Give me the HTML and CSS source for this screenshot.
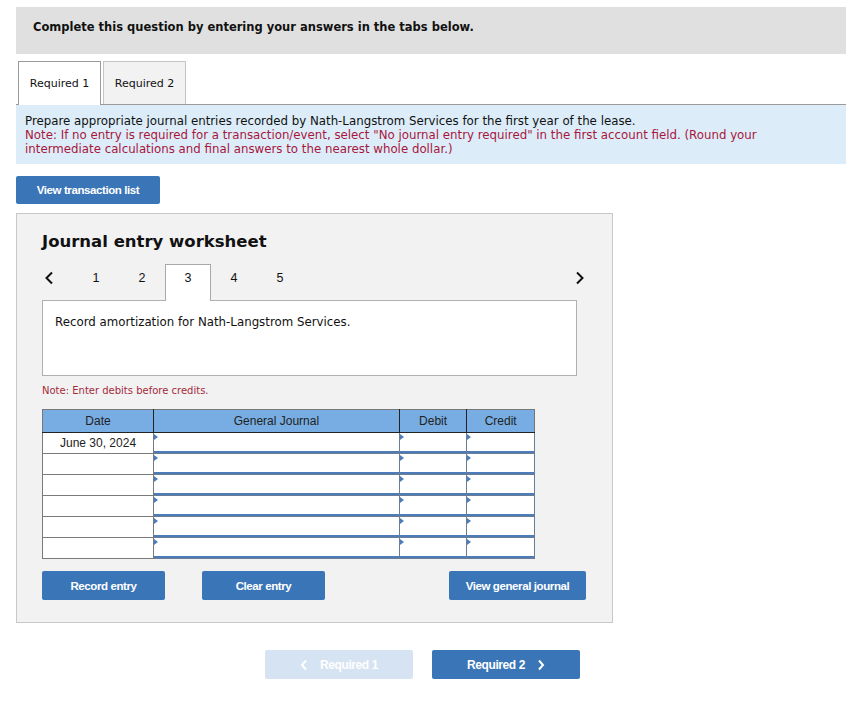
FILE: index.html
```html
<!DOCTYPE html>
<html lang="en">
<head>
    <meta charset="UTF-8">
    <title>Journal entry worksheet</title>
    <link rel="stylesheet" href="styles.css">
</head>
<body>
    <div class="pagina">
        <div class="cabecera">Complete this question by entering your answers in the tabs below.</div>

        <div class="pestanas">
            <div class="pestana activa">Required 1</div>
            <div class="pestana">Required 2</div>
        </div>

        <div class="instrucciones">
            Prepare appropriate journal entries recorded by Nath-Langstrom Services for the first year of the lease.<br>
            <span class="nota">Note: If no entry is required for a transaction/event, select "No journal entry required" in the first account field. (Round your intermediate calculations and final answers to the nearest whole dollar.)</span>
        </div>

        <button class="boton lista">View transaction list</button>

        <div class="hoja">
            <h2>Journal entry worksheet</h2>
            <div class="navegacion">
                <span class="flecha">
                    <svg width="10" height="14" viewBox="0 0 10 14"><polyline points="8,1.5 2.5,7 8,12.5" fill="none" stroke="#111" stroke-width="2"/></svg>
                </span>
                <span class="paso">1</span>
                <span class="paso">2</span>
                <span class="paso actual">3</span>
                <span class="paso">4</span>
                <span class="paso">5</span>
                <span class="hueco"></span>
                <span class="flecha der">
                    <svg width="10" height="14" viewBox="0 0 10 14"><polyline points="2,1.5 7.5,7 2,12.5" fill="none" stroke="#111" stroke-width="2"/></svg>
                </span>
            </div>
            <div class="descripcion">Record amortization for Nath-Langstrom Services.</div>
            <p class="aviso">Note: Enter debits before credits.</p>

            <table class="diario">
                <thead>
                    <tr>
                        <th class="c-fecha">Date</th>
                        <th class="c-cuenta">General Journal</th>
                        <th class="c-num">Debit</th>
                        <th class="c-num">Credit</th>
                    </tr>
                </thead>
                <tbody>
                    <tr>
                        <td class="fecha">June 30, 2024</td>
                        <td class="campo"><div class="caja"></div></td>
                        <td class="campo"><div class="caja"></div></td>
                        <td class="campo"><div class="caja"></div></td>
                    </tr>
                    <tr>
                        <td class="fecha"></td>
                        <td class="campo"><div class="caja"></div></td>
                        <td class="campo"><div class="caja"></div></td>
                        <td class="campo"><div class="caja"></div></td>
                    </tr>
                    <tr>
                        <td class="fecha"></td>
                        <td class="campo"><div class="caja"></div></td>
                        <td class="campo"><div class="caja"></div></td>
                        <td class="campo"><div class="caja"></div></td>
                    </tr>
                    <tr>
                        <td class="fecha"></td>
                        <td class="campo"><div class="caja"></div></td>
                        <td class="campo"><div class="caja"></div></td>
                        <td class="campo"><div class="caja"></div></td>
                    </tr>
                    <tr>
                        <td class="fecha"></td>
                        <td class="campo"><div class="caja"></div></td>
                        <td class="campo"><div class="caja"></div></td>
                        <td class="campo"><div class="caja"></div></td>
                    </tr>
                    <tr>
                        <td class="fecha"></td>
                        <td class="campo"><div class="caja"></div></td>
                        <td class="campo"><div class="caja"></div></td>
                        <td class="campo"><div class="caja"></div></td>
                    </tr>
                </tbody>
            </table>

            <div class="acciones">
                <button class="boton registrar">Record entry</button>
                <button class="boton limpiar">Clear entry</button>
                <button class="boton ver">View general journal</button>
            </div>
        </div>

        <div class="pie">
            <button class="boton anterior">
                <svg width="8" height="12" viewBox="0 0 8 12"><polyline points="6,1.5 2,6 6,10.5" fill="none" stroke="#fff" stroke-width="2"/></svg>
                Required 1
            </button>
            <button class="boton siguiente">
                Required 2
                <svg width="8" height="12" viewBox="0 0 8 12"><polyline points="2,1.5 6,6 2,10.5" fill="none" stroke="#fff" stroke-width="2"/></svg>
            </button>
        </div>
    </div>
</body>
</html>
```

FILE: styles.css
```css
body{
    margin: 0;
    padding: 0;
    font-family: "DejaVu Sans", Verdana, sans-serif;
    color: #111;
    background: #fff;
}
.pagina{
    width: 830px;
    padding: 7px 0 0 16px;
}
.cabecera{
    height: 47px;
    box-sizing: border-box;
    padding: 12px 17px 0;
    background-color: #e0e0e0;
    font-size: 11.5px;
    font-weight: bold;
    line-height: 16px;
}
.pestanas{
    display: flex;
    gap: 2px;
    margin-top: 7px;
    padding-left: 2px;
    border-bottom: 1px solid #9a9a9a;
}
.pestana{
    width: 83px;
    height: 43px;
    box-sizing: border-box;
    border: 1px solid #c4c4c4;
    border-bottom: none;
    background-color: #f2f2f2;
    font-size: 11px;
    line-height: 43px;
    text-align: center;
    margin-bottom: -1px;
}
.pestana.activa{
    background-color: #fff;
    border-color: #9a9a9a;
    height: 44px;
}
.instrucciones{
    background-color: #dcedf9;
    padding: 9px 70px 8px 9px;
    font-size: 11.8px;
    line-height: 14px;
}
.nota{
    color: #a8163c;
}
.boton{
    border: none;
    border-radius: 2px;
    background-color: #3a75b8;
    color: #fff;
    font-family: "Liberation Sans", Arial, sans-serif;
    font-weight: bold;
    font-size: 11.5px;
    letter-spacing: -0.4px;
    cursor: pointer;
    padding: 0;
}
.lista{
    display: block;
    margin-top: 12px;
    width: 144px;
    height: 28px;
}
.hoja{
    margin-top: 9px;
    width: 597px;
    box-sizing: border-box;
    background-color: #f2f2f2;
    border: 1px solid #c8c8c8;
    padding: 17px 0 22px 25px;
}
.hoja h2{
    margin: 0;
    font-size: 16.5px;
    line-height: 22px;
}
.navegacion{
    display: flex;
    align-items: flex-start;
    margin-top: 11px;
    width: 548px;
    height: 36px;
    font-family: "Liberation Sans", Arial, sans-serif;
    font-size: 12.5px;
}
.flecha{
    width: 31px;
    display: flex;
    padding: 7px 0 0 2px;
    box-sizing: border-box;
}
.flecha.der{
    width: 17px;
}
.paso{
    width: 46px;
    height: 36px;
    line-height: 28px;
    text-align: center;
    box-sizing: border-box;
}
.paso.actual{
    background-color: #fff;
    border: 1px solid #a8a8a8;
    border-bottom: none;
    height: 37px;
    line-height: 26px;
    margin-bottom: -1px;
    position: relative;
    z-index: 1;
}
.hueco{
    flex: 1;
}
.descripcion{
    width: 535px;
    height: 76px;
    box-sizing: border-box;
    background-color: #fff;
    border: 1px solid #b0b0b0;
    padding: 13px 12px;
    font-size: 11.8px;
    line-height: 16px;
}
.aviso{
    margin: 9px 0 0;
    font-size: 10px;
    line-height: 12px;
    color: #a52a3a;
}
.diario{
    margin-top: 12px;
    border-collapse: collapse;
    width: 493px;
    font-family: "Liberation Sans", Arial, sans-serif;
    font-size: 12px;
    border: 1px solid #777;
}
.diario th{
    background-color: #78ade3;
    font-weight: normal;
    color: #222;
    height: 22px;
    padding: 0;
    border-left: 1px solid #222;
    border-bottom: 1px solid #222;
}
.diario th:first-child{
    border-left: 1px solid #777;
}
.c-fecha{ width: 111px; }
.c-cuenta{ width: 247px; }
.c-num{ width: 67px; }
.diario td{
    padding: 0;
    height: 20px;
    border: 1px solid #7a7a7a;
    background-color: #fff;
}
.diario td.fecha{
    text-align: center;
    color: #222;
}
.diario td.campo{
    border-color: #6a7d96;
    border-left: 1px solid #555;
}
.caja{
    height: 18px;
    border-bottom: 2px solid #4d7cb9;
    position: relative;
}
.caja::before{
    content: "";
    position: absolute;
    left: 0;
    top: 1px;
    border-left: 4px solid #4d7cb9;
    border-top: 3px solid transparent;
    border-bottom: 3px solid transparent;
}
.acciones{
    display: flex;
    margin-top: 12px;
    width: 544px;
}
.acciones .boton{
    height: 29px;
}
.registrar{ width: 123px; }
.limpiar{ width: 123px; margin-left: 37px; }
.ver{ width: 137px; margin-left: auto; }
.pie{
    display: flex;
    gap: 19px;
    margin-top: 27px;
    padding-left: 249px;
}
.pie .boton{
    height: 29px;
    width: 148px;
    font-size: 12px;
    display: flex;
    align-items: center;
    justify-content: center;
    gap: 12px;
}
.anterior{
    background-color: #d6e3f2;
    cursor: default;
}
```
